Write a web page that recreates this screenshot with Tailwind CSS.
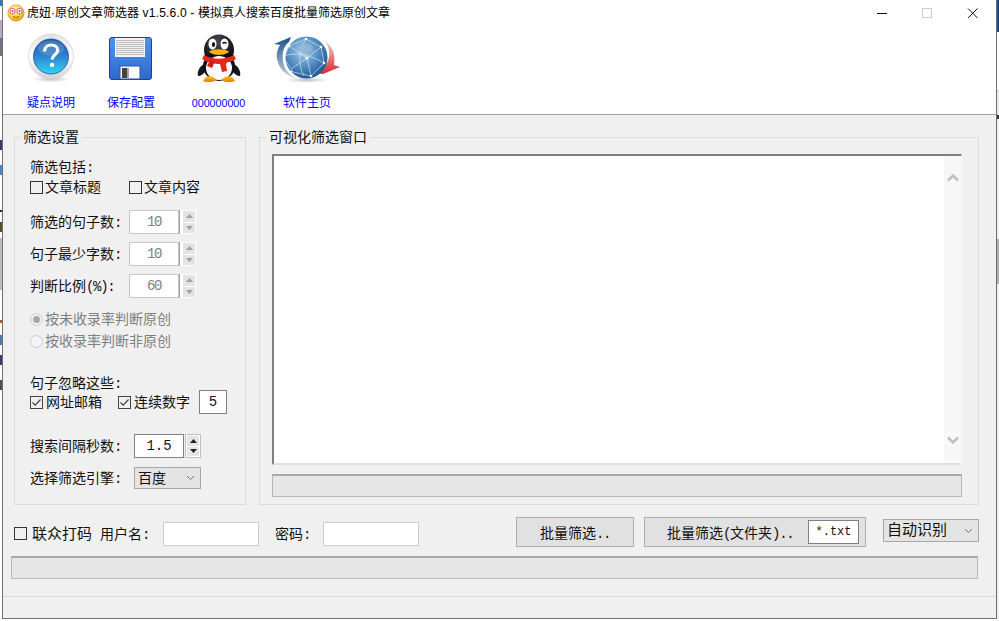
<!DOCTYPE html>
<html lang="zh-CN">
<head>
<meta charset="UTF-8">
<title>虎妞·原创文章筛选器</title>
<script src="https://cdn.jsdelivr.net/npm/@tailwindcss/browser@4"></script>
</head>
<body class="w-[999px] h-[621px] overflow-hidden bg-white font-['Liberation_Sans','Noto_Sans_CJK_SC',sans-serif] text-[14px] leading-[20px] text-[#111]">
<div class="flex h-[621px]">
  <!-- desktop behind the window, left edge -->
  <div class="w-[2px] h-[621px] flex flex-col bg-white">
    <div class="h-[6px] bg-[#3a78b8]"></div>
    <div class="h-[14px]"></div>
    <div class="h-[18px] bg-[#b8a8c8]"></div>
    <div class="h-[18px] bg-[#77707f]"></div>
    <div class="h-[84px]"></div>
    <div class="h-[10px] bg-[#38386a]"></div>
    <div class="h-[15px]"></div>
    <div class="h-[10px] bg-[#4a88c8]"></div>
    <div class="h-[35px]"></div>
    <div class="h-[2px] bg-[#222]"></div>
    <div class="h-[10px]"></div>
    <div class="h-[10px] bg-[#5a4a30]"></div>
    <div class="h-[6px]"></div>
    <div class="h-[52px] bg-[#bcbcbc]"></div>
    <div class="h-[30px]"></div>
    <div class="h-[3px] bg-[#a06030]"></div>
    <div class="h-[12px]"></div>
    <div class="h-[10px] bg-[#4a78b8]"></div>
    <div class="h-[10px]"></div>
    <div class="h-[10px] bg-[#38386a]"></div>
    <div class="h-[15px]"></div>
    <div class="h-[10px] bg-[#554a50]"></div>
    <div class="flex-1 bg-white"></div>
  </div>

  <div class="w-[995px] h-[619px] flex flex-col border-x border-b border-[#707070] bg-[#f0f0f0]">
    <!-- title bar -->
    <div class="h-[30px] bg-white flex items-start pl-[4px]">
      <svg class="mt-[4px]" width="18" height="18" viewBox="0 0 18 18">
        <defs><radialGradient id="sm" cx="40%" cy="30%" r="75%"><stop offset="0" stop-color="#fff6b0"/><stop offset="0.6" stop-color="#f8d040"/><stop offset="1" stop-color="#d89810"/></radialGradient></defs>
        <circle cx="9" cy="9" r="8.2" fill="url(#sm)" stroke="#c89020" stroke-width="0.6"/>
        <rect x="3" y="4.5" width="5" height="5" rx="1.6" fill="#fff" stroke="#e05890" stroke-width="1"/>
        <rect x="10" y="4.5" width="5" height="5" rx="1.6" fill="#fff" stroke="#e05890" stroke-width="1"/>
        <circle cx="5.5" cy="7" r="1" fill="#904060"/><circle cx="12.5" cy="7" r="1" fill="#904060"/>
        <path d="M6 12.5q3 2.4 6 0" fill="none" stroke="#a06010" stroke-width="1"/>
      </svg>
      <span class="ml-[2px] mt-[4px] w-[400px] text-[12px] leading-[18px] text-black whitespace-nowrap">虎妞·原创文章筛选器<span class="tracking-[0.2px]"> v1.5.6.0 - </span>模拟真人搜索百度批量筛选原创文章</span>
      <div class="flex-1"></div>
      <svg class="mt-[8px]" width="101" height="11" viewBox="0 0 101 11" fill="none">
        <path d="M0 5.5H10" stroke="#111" stroke-width="1"/>
        <rect x="45.5" y="0.5" width="9" height="9" stroke="#ccc"/>
        <path d="M91 0.5L100.5 10M100.5 0.5L91 10" stroke="#111" stroke-width="1"/>
      </svg>
      <div class="w-[18px]"></div>
    </div>

    <!-- toolbar -->
    <div class="h-[85px] bg-white border-b border-[#a0a0a0] flex pl-[8px] text-[12px] leading-[16px] text-[#0000ff]">
      <div class="w-[80px] flex flex-col items-center">
        <svg width="66" height="60" viewBox="0 0 66 60">
          <defs>
            <linearGradient id="ring" x1="0" y1="0" x2="0" y2="1"><stop offset="0" stop-color="#e2e2e2"/><stop offset="0.5" stop-color="#fff"/><stop offset="1" stop-color="#d0d0d0"/></linearGradient>
            <linearGradient id="ball" x1="0" y1="0" x2="0" y2="1"><stop offset="0" stop-color="#1b5aa8"/><stop offset="0.45" stop-color="#2f7dcc"/><stop offset="1" stop-color="#2fd6f4"/></linearGradient>
            <radialGradient id="shade" cx="50%" cy="50%" r="50%"><stop offset="0" stop-color="#999" stop-opacity="0.65"/><stop offset="1" stop-color="#aaa" stop-opacity="0"/></radialGradient>
          </defs>
          <ellipse cx="33" cy="49" rx="19" ry="3.5" fill="url(#shade)"/>
          <circle cx="33" cy="26.5" r="22.5" fill="url(#ring)" stroke="#d4d4d4" stroke-width="0.8"/>
          <circle cx="33" cy="26.5" r="17.5" fill="url(#ball)" stroke="#154f96" stroke-width="0.8"/>
          <ellipse cx="33" cy="18" rx="13" ry="7.5" fill="#fff" opacity="0.16"/>
          <path d="M26.5 21.5c0-4.2 3-6.5 6.8-6.5 3.7 0 6.4 2 6.4 5.2 0 4.5-5.6 4.6-5.6 9.3" fill="none" stroke="#fff" stroke-width="3.2"/>
          <circle cx="34" cy="35" r="2.2" fill="#fff"/>
        </svg>
        <span class="mt-[5px]">疑点说明</span>
      </div>
      <div class="w-[80px] flex flex-col items-center">
        <svg width="66" height="60" viewBox="0 0 66 60">
          <defs><linearGradient id="disk" x1="0" y1="0" x2="0" y2="1"><stop offset="0" stop-color="#4f94ea"/><stop offset="1" stop-color="#2f68d0"/></linearGradient></defs>
          <rect x="11.5" y="7.5" width="42" height="42" rx="2.5" fill="url(#disk)" stroke="#24408a"/>
          <rect x="17" y="8" width="30" height="19" fill="#f4f4f4"/>
          <path d="M18 10.5H46M18 12.5H46M18 14.5H46M18 16.5H46M18 18.5H46M18 20.5H46M18 22.5H46M18 24.5H46" stroke="#b4b4b4" stroke-width="0.9"/>
          <rect x="22" y="36" width="20" height="13" fill="#f8f8f8" stroke="#2a54b0"/>
          <rect x="24" y="38" width="5.5" height="10" fill="#444"/>
          <rect x="29.5" y="38" width="1.5" height="10" fill="#aaa"/>
        </svg>
        <span class="mt-[5px]">保存配置</span>
      </div>
      <div class="w-[95px] flex flex-col items-center">
        <svg width="66" height="60" viewBox="0 0 66 60">
          <defs>
            <radialGradient id="peng" cx="45%" cy="25%" r="70%"><stop offset="0" stop-color="#484858"/><stop offset="1" stop-color="#08080c"/></radialGradient>
            <linearGradient id="foot" x1="0" y1="0" x2="0" y2="1"><stop offset="0" stop-color="#fcc010"/><stop offset="1" stop-color="#e87c08"/></linearGradient>
          </defs>
          <path d="M18 34c-5 3-7 8-6 12 3 0 6-2 8-6zM48 34c5 3 7 8 6 12-3 0-6-2-8-6z" fill="#16161c"/>
          <ellipse cx="33" cy="20" rx="15" ry="15.5" fill="url(#peng)"/>
          <ellipse cx="33" cy="36" rx="16" ry="15" fill="#101016"/>
          <ellipse cx="33" cy="38" rx="13" ry="12" fill="#fbfbfb"/>
          <path d="M18 25c10 5 20 5 30 0l2 4c-3 2-6 3-9 3.500l-1 1.500 1 7-5 1-2-8c-6 0-11-1-18-5z" fill="#e4291c"/>
          <path d="M24 30l-3 6 5 2 3-7z" fill="#c8201a"/>
          <ellipse cx="26.500" cy="14" rx="4" ry="5.500" fill="#fff"/>
          <ellipse cx="38.500" cy="14" rx="4" ry="5.500" fill="#fff"/>
          <ellipse cx="27.500" cy="14.500" rx="1.600" ry="2.600" fill="#111"/>
          <path d="M36.500 13.500q2 -2 4 0" stroke="#111" stroke-width="1.300" fill="none"/>
          <path d="M23 21.500c5-3 15-3 20 0-3 4.500-17 4.500-20 0z" fill="#f8b010"/>
          <path d="M19 48c3-3 9-2 11 2 0 2-10 3-13 1zM47 48c-3-3-9-2-11 2 0 2 10 3 13 1z" fill="url(#foot)"/>
        </svg>
        <span class="mt-[5px] font-['Liberation_Sans'] text-[10.700px]">000000000</span>
      </div>
      <div class="w-[82px] flex flex-col items-center">
        <svg width="68" height="60" viewBox="0 0 68 60">
          <defs>
            <radialGradient id="globe" cx="42%" cy="35%" r="70%"><stop offset="0" stop-color="#a8cbe6"/><stop offset="0.55" stop-color="#4f8cc0"/><stop offset="1" stop-color="#1b4f88"/></radialGradient>
            <linearGradient id="sw" x1="0" y1="0" x2="0" y2="1"><stop offset="0" stop-color="#1c5088"/><stop offset="1" stop-color="#c8d4e0"/></linearGradient>
            <linearGradient id="sr" x1="0" y1="0" x2="0" y2="1"><stop offset="0" stop-color="#f0d0d0"/><stop offset="1" stop-color="#d82828"/></linearGradient>
          </defs>
          <ellipse cx="34" cy="50" rx="22" ry="3" fill="url(#shade)"/>
          <path d="M1 14l17-7-2 5c-6 4-8 14-5 23 2 6 6 10 12 13-10-2-17-9-19-19-1-6 1-11 3-14z" fill="url(#sw)"/>
          <path d="M52 11c7 5 11 13 9 24l6 2-17 7 -9-1c8-2 14-8 15-16 1-6-1-12-4-16z" fill="url(#sr)"/>
          <circle cx="33.500" cy="27.500" r="21" fill="url(#globe)"/>
          <g fill="none" stroke="#e4f0fa" stroke-width="0.700" opacity="0.850">
            <path d="M16 16l17-7 15 8 3 16-13 13-18-4-9-14z"/>
            <path d="M16 16l18 12 14-11M34 28l4 18M34 28l-16 11M12 26c8-4 24-2 39 7"/>
            <path d="M33 9c-7 10-9 24-2 37"/>
          </g>
          <g fill="#fff"><circle cx="16" cy="16" r="1.300"/><circle cx="33" cy="9" r="1.300"/><circle cx="48" cy="17" r="1.300"/><circle cx="51" cy="33" r="1.300"/><circle cx="38" cy="46" r="1.300"/><circle cx="18" cy="42" r="1.300"/><circle cx="34" cy="28" r="1.500"/></g>
          <path d="M24 16l9-3 7 3-2 6-8 1-6-3z" fill="#8fb5d4" opacity="0.700"/>
        </svg>
        <span class="mt-[5px]">软件主页</span>
      </div>
    </div>

    <!-- groups -->
    <div class="flex pl-[11px] pt-[22px] gap-[13px]">
      <div class="relative w-[232px] h-[368px] border border-[#dcdcdc] pl-[15px] flex flex-col">
        <span class="absolute left-[5px] -top-[11px] px-[3px] bg-[#f0f0f0] whitespace-nowrap">筛选设置</span>
        <div class="mt-[19px] h-[20px]">筛选包括<span class="font-['Liberation_Mono'] text-[14px] tracking-[-1.300px] leading-[0px]">:</span></div>
        <div class="flex items-center h-[20px]">
          <span class="w-[13px] h-[13px] border border-[#333]"></span>
          <span class="ml-[2px] w-[84px]">文章标题</span>
          <span class="w-[13px] h-[13px] border border-[#333]"></span>
          <span class="ml-[2px]">文章内容</span>
        </div>

        <div class="mt-[13px] flex items-center h-[24px]">
          <span class="w-[99px]">筛选的句子数<span class="font-['Liberation_Mono'] text-[14px] tracking-[-1.300px] leading-[0px]">:</span></span>
          <span class="w-[50px] h-[24px] bg-white border border-[#c8c8c8] text-center text-[#808080] font-['Liberation_Mono'] text-[14px] tracking-[-1.400px] leading-[22px]">10</span>
          <div class="w-[17px] h-[24px] bg-white border-l border-[#a0a0a0] pl-[3px] pr-[1px] py-[1px] flex flex-col gap-[1px]">
            <span class="flex-1 bg-[#e4e4e4] flex items-center justify-center"><svg width="7" height="4" viewBox="0 0 7 4"><path d="M3.500 0L7 4H0z" fill="#a0a0a0"/></svg></span>
            <span class="flex-1 bg-[#e4e4e4] flex items-center justify-center"><svg width="7" height="4" viewBox="0 0 7 4"><path d="M3.500 4L7 0H0z" fill="#a0a0a0"/></svg></span>
          </div>
        </div>
        <div class="mt-[8px] flex items-center h-[24px]">
          <span class="w-[99px]">句子最少字数<span class="font-['Liberation_Mono'] text-[14px] tracking-[-1.300px] leading-[0px]">:</span></span>
          <span class="w-[50px] h-[24px] bg-white border border-[#c8c8c8] text-center text-[#808080] font-['Liberation_Mono'] text-[14px] tracking-[-1.400px] leading-[22px]">10</span>
          <div class="w-[17px] h-[24px] bg-white border-l border-[#a0a0a0] pl-[3px] pr-[1px] py-[1px] flex flex-col gap-[1px]">
            <span class="flex-1 bg-[#e4e4e4] flex items-center justify-center"><svg width="7" height="4" viewBox="0 0 7 4"><path d="M3.500 0L7 4H0z" fill="#a0a0a0"/></svg></span>
            <span class="flex-1 bg-[#e4e4e4] flex items-center justify-center"><svg width="7" height="4" viewBox="0 0 7 4"><path d="M3.500 4L7 0H0z" fill="#a0a0a0"/></svg></span>
          </div>
        </div>
        <div class="mt-[8px] flex items-center h-[24px]">
          <span class="w-[99px]">判断比例<span class="font-['Liberation_Mono'] text-[14px] tracking-[-1.300px] leading-[0px]">(%):</span></span>
          <span class="w-[50px] h-[24px] bg-white border border-[#c8c8c8] text-center text-[#808080] font-['Liberation_Mono'] text-[14px] tracking-[-1.400px] leading-[22px]">60</span>
          <div class="w-[17px] h-[24px] bg-white border-l border-[#a0a0a0] pl-[3px] pr-[1px] py-[1px] flex flex-col gap-[1px]">
            <span class="flex-1 bg-[#e4e4e4] flex items-center justify-center"><svg width="7" height="4" viewBox="0 0 7 4"><path d="M3.500 0L7 4H0z" fill="#a0a0a0"/></svg></span>
            <span class="flex-1 bg-[#e4e4e4] flex items-center justify-center"><svg width="7" height="4" viewBox="0 0 7 4"><path d="M3.500 4L7 0H0z" fill="#a0a0a0"/></svg></span>
          </div>
        </div>

        <div class="mt-[11px] flex items-center h-[20px] text-[#808080]">
          <span class="w-[13px] h-[13px] rounded-full border border-[#cccccc] flex items-center justify-center"><span class="w-[7px] h-[7px] rounded-full bg-[#a8a8a8]"></span></span>
          <span class="ml-[2px]">按未收录率判断原创</span>
        </div>
        <div class="mt-[2px] flex items-center h-[20px] text-[#808080]">
          <span class="w-[13px] h-[13px] rounded-full border border-[#cccccc] bg-[#f4f4f4]"></span>
          <span class="ml-[2px]">按收录率判断非原创</span>
        </div>

        <div class="mt-[22px] h-[20px]">句子忽略这些<span class="font-['Liberation_Mono'] text-[14px] tracking-[-1.300px] leading-[0px]">:</span></div>
        <div class="-mt-[3px] flex items-center h-[24px]">
          <svg width="13" height="13" viewBox="0 0 13 13" fill="none"><rect x="0.500" y="0.500" width="12" height="12" stroke="#444"/><path d="M2.500 6.500L5.200 9.200L10.500 3.500" stroke="#444" stroke-width="1.200"/></svg>
          <span class="ml-[3px] w-[72px]">网址邮箱</span>
          <svg width="13" height="13" viewBox="0 0 13 13" fill="none"><rect x="0.500" y="0.500" width="12" height="12" stroke="#444"/><path d="M2.500 6.500L5.200 9.200L10.500 3.500" stroke="#444" stroke-width="1.200"/></svg>
          <span class="ml-[3px] w-[65px]">连续数字</span>
          <span class="w-[28px] h-[24px] bg-white border border-[#808080] text-center font-['Liberation_Mono'] text-[14px] leading-[22px]">5</span>
        </div>

        <div class="mt-[20px] flex items-center h-[24px]">
          <span class="w-[104px]">搜索间隔秒数<span class="font-['Liberation_Mono'] text-[14px] tracking-[-1.300px] leading-[0px]">:</span></span>
          <span class="w-[50px] h-[24px] bg-white border border-[#808080] text-center font-['Liberation_Mono'] text-[14px] leading-[22px]">1.5</span>
          <div class="ml-[1px] w-[16px] h-[24px] bg-white border border-[#c0c0c0] p-[1px] flex flex-col gap-[1px]">
            <span class="flex-1 bg-[#e4e4e4] flex items-center justify-center"><svg width="7" height="4" viewBox="0 0 7 4"><path d="M3.500 0L7 4H0z" fill="#222"/></svg></span>
            <span class="flex-1 bg-[#e4e4e4] flex items-center justify-center"><svg width="7" height="4" viewBox="0 0 7 4"><path d="M3.500 4L7 0H0z" fill="#222"/></svg></span>
          </div>
        </div>
        <div class="mt-[9px] flex items-center h-[22px]">
          <span class="w-[104px]">选择筛选引擎<span class="font-['Liberation_Mono'] text-[14px] tracking-[-1.300px] leading-[0px]">:</span></span>
          <div class="w-[67px] h-[22px] bg-[#e4e4e4] border border-[#a8a8a8] flex items-center pl-[3px] pr-[5px] justify-between">
            <span>百度</span>
            <svg width="9" height="6" viewBox="0 0 9 6" fill="none"><path d="M1 1L4.500 4.500L8 1" stroke="#777"/></svg>
          </div>
        </div>
      </div>

      <div class="relative w-[720px] h-[368px] border border-[#dcdcdc] pl-[12px] pt-[16px]">
        <span class="absolute left-[6px] -top-[11px] px-[3px] bg-[#f0f0f0] whitespace-nowrap">可视化筛选窗口</span>
        <div class="w-[690px] h-[311px] flex bg-white border-t-2 border-l-2 border-[#808080] border-r border-r-[#f8f8f8] border-b-2 border-b-[#e0e0e0]">
          <div class="flex-1"></div>
          <div class="w-[17px] bg-[#f7f7f7] flex flex-col items-center justify-between pt-[18px] pb-[19px]">
            <svg width="12" height="8" viewBox="0 0 12 8" fill="none"><path d="M1 6.500L6 1.500L11 6.500" stroke="#c0c0c0" stroke-width="2.500"/></svg>
            <svg width="12" height="8" viewBox="0 0 12 8" fill="none"><path d="M1 1.500L6 6.500L11 1.500" stroke="#c0c0c0" stroke-width="2.500"/></svg>
          </div>
        </div>
        <div class="mt-[9px] w-[690px] h-[23px] bg-[#e6e6e6] border border-[#b8b8b8] border-t-2 border-t-[#a8a8a8]"></div>
      </div>
    </div>

    <!-- bottom row -->
    <div class="flex items-start pl-[11px] pt-[12px] h-[42px]">
      <span class="mt-[10px] w-[13px] h-[13px] border border-[#333]"></span>
      <span class="ml-[5px] mt-[7px] w-[68px] text-[15px] whitespace-nowrap">联众打码</span>
      <span class="mt-[7px] w-[63px] whitespace-nowrap">用户名<span class="font-['Liberation_Mono'] text-[14px] tracking-[-1.300px] leading-[0px]">:</span></span>
      <span class="mt-[5px] w-[96px] h-[24px] bg-white border border-[#cccccc]"></span>
      <span class="ml-[16px] mt-[7px] w-[48px] whitespace-nowrap">密码<span class="font-['Liberation_Mono'] text-[14px] tracking-[-1.300px] leading-[0px]">:</span></span>
      <span class="mt-[5px] w-[96px] h-[24px] bg-white border border-[#cccccc]"></span>
      <button class="ml-[97px] w-[118px] h-[30px] pt-[1px] bg-[#e1e1e1] border border-[#adadad] whitespace-nowrap">批量筛选<span class="font-['Liberation_Mono'] text-[14px] tracking-[-1.300px] leading-[0px]">..</span></button>
      <div class="ml-[10px] w-[222px] h-[30px] bg-[#e1e1e1] border border-[#adadad] flex items-center">
        <span class="ml-[22px] pt-[1px] w-[141px] whitespace-nowrap">批量筛选<span class="font-['Liberation_Mono'] text-[14px] tracking-[-1.300px] leading-[0px]">(</span>文件夹<span class="font-['Liberation_Mono'] text-[14px] tracking-[-1.300px] leading-[0px]">)..</span></span>
        <span class="w-[51px] h-[24px] bg-white border border-[#808080] text-center font-['Liberation_Mono'] text-[12px] leading-[22px]">*.txt</span>
      </div>
      <div class="ml-[17px] mt-[2px] w-[96px] h-[23px] bg-[#e4e4e4] border border-[#a8a8a8] flex items-center pl-[3px] pr-[5px] justify-between">
        <span class="text-[15px] -mt-[1px]">自动识别</span>
        <svg width="9" height="6" viewBox="0 0 9 6" fill="none"><path d="M1 1L4.500 4.500L8 1" stroke="#777"/></svg>
      </div>
    </div>

    <div class="ml-[8px] mt-[9px] w-[967px] h-[23px] bg-[#e6e6e6] border border-[#b8b8b8] border-t-2 border-t-[#a8a8a8]"></div>
    <div class="mt-[17px] flex-1 border-t border-[#d8d8d8]"></div>
  </div>

  <!-- desktop behind the window, right edge -->
  <div class="w-[2px] h-[621px] flex flex-col bg-[#f0f0f0]">
    <div class="h-[32px] bg-[#0b4f9c]"></div>
    <div class="h-[58px] bg-white"></div>
    <div class="h-[1px] bg-[#ccc]"></div>
    <div class="h-[24px] bg-[#e8e8e8]"></div>
    <div class="h-[4px] bg-[#333]"></div>
    <div class="h-[120px] bg-[#f0f0f0]"></div>
    <div class="h-[45px] bg-[#b0b0b0]"></div>
    <div class="flex-1 bg-[#f0f0f0]"></div>
  </div>
</div>
</body>
</html>
